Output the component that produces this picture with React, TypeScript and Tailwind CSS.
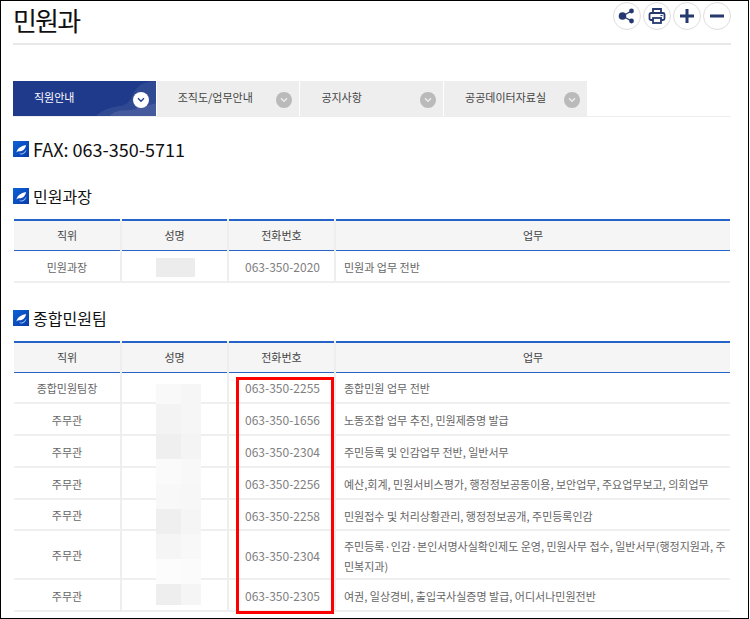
import React from "react";

const FONT = "font-['Noto_Sans_CJK_KR','Noto_Sans',sans-serif]";

function Leaf() {
  return (
    <svg width="16" height="16" viewBox="0 0 16 16" className="shrink-0">
      <defs>
        <linearGradient id="lf" x1="0" y1="0" x2="1" y2="1">
          <stop offset="0" stopColor="#0a63d8" />
          <stop offset="1" stopColor="#0b3aa8" />
        </linearGradient>
      </defs>
      <rect width="16" height="16" fill="url(#lf)" />
      <path d="M3.5 11.5C4 8 7.5 5 13 4 12.6 7.5 10 10.6 6 10.3 5 10.3 4.2 10.8 3.5 11.5Z" fill="#fff" />
      <path d="M6 12.6C9 12.8 11.8 11.6 13.4 8.5 13.2 11.2 11 13.6 8.2 13.5 7.4 13.5 6.6 13.2 6 12.6Z" fill="#8dbdf2" />
    </svg>
  );
}

function Chevron({ active }: { active?: boolean }) {
  return (
    <span className={`flex h-4 w-4 items-center justify-center rounded-full ${active ? "bg-white" : "bg-[#bababa]"}`}>
      <svg width="8" height="6" viewBox="0 0 8 6" fill="none">
        <path d="M1 1.3 4 4.3 7 1.3" stroke={active ? "#1f3a8a" : "#eeeeee"} strokeWidth="1.3" />
      </svg>
    </span>
  );
}

function Tab({ label, active }: { label: string; active?: boolean }) {
  return (
    <div
      className={`relative flex h-[35px] w-[142.7px] items-center overflow-hidden pl-[21px] ${active ? "bg-[#1f3a8a] text-white" : "bg-[#eeeeee] text-[#444444]"}`}
    >
      {active && (
        <svg className="absolute bottom-0 right-0" width="70" height="35" viewBox="0 0 70 35">
          <path d="M10 35C22 24 32 27 40 23 47 19 46 8 56 3 60 1 66 0 70 0V35Z" fill="#fff" opacity="0.08" />
          <path d="M24 35C32 26 42 32 52 27 60 23 64 25 70 22V35Z" fill="#fff" opacity="0.1" />
        </svg>
      )}
      <span className="relative -mt-[2px] text-[11px] leading-none">{label}</span>
      <span className="absolute right-[7px] top-[11px]"><Chevron active={active} /></span>
    </div>
  );
}

function RoundBtn({ children }: { children: React.ReactNode }) {
  return (
    <div className="flex h-[28px] w-[28px] items-center justify-center rounded-full border border-[#dddddd] bg-white">
      {children}
    </div>
  );
}

function Heading({ children, cls }: { children: React.ReactNode; cls: string }) {
  return (
    <div className={`flex items-center gap-[4px] ${cls}`}>
      <Leaf />
      <span className="text-[16px] leading-none text-[#111111]">{children}</span>
    </div>
  );
}

type Row = { role: string; tel: string; work: React.ReactNode; h: string };

function InfoTable({ rows }: { rows: Row[] }) {
  return (
    <table className="w-[716px] table-fixed border-collapse border-t-2 border-t-[#2563c9] text-[11px] text-[#666666]">
      <colgroup>
        <col className="w-[107px]" />
        <col className="w-[107px]" />
        <col className="w-[107px]" />
        <col />
      </colgroup>
      <thead>
        <tr className="h-[30px] border-b border-b-[#2563c9] bg-[#f5f5f5] text-[#444444]">
          <th className="border-r-2 border-r-[#eeeeee] font-normal">직위</th>
          <th className="border-r-2 border-r-[#eeeeee] font-normal">성명</th>
          <th className="border-r-2 border-r-[#eeeeee] font-normal">전화번호</th>
          <th className="font-normal">업무</th>
        </tr>
      </thead>
      <tbody>
        {rows.map((r, i) => (
          <tr key={i} className={`${r.h} border-b-2 border-b-[#efefef]`}>
            <td className="border-r-2 border-r-[#eeeeee] pt-[2px] text-center">{r.role}</td>
            <td className="border-r-2 border-r-[#eeeeee]" />
            <td className="border-r-2 border-r-[#eeeeee] pl-[2px] pt-[2px] text-center text-[12px] text-[#808080]">{r.tel}</td>
            <td className="pl-[8px] pr-[3px] pt-[2px] leading-[20px]">{r.work}</td>
          </tr>
        ))}
      </tbody>
    </table>
  );
}

const rows1: Row[] = [{ role: "민원과장", tel: "063-350-2020", work: "민원과 업무 전반", h: "h-[32px]" }];

const rows2: Row[] = [
  { role: "종합민원팀장", tel: "063-350-2255", work: "종합민원 업무 전반", h: "h-[31px]" },
  { role: "주무관", tel: "063-350-1656", work: "노동조합 업무 추진, 민원제증명 발급", h: "h-[32px]" },
  { role: "주무관", tel: "063-350-2304", work: "주민등록 및 인감업무 전반, 일반서무", h: "h-[32px]" },
  { role: "주무관", tel: "063-350-2256", work: "예산,회계, 민원서비스평가, 행정정보공동이용, 보안업무, 주요업무보고, 의회업무", h: "h-[32px]" },
  { role: "주무관", tel: "063-350-2258", work: "민원접수 및 처리상황관리, 행정정보공개, 주민등록인감", h: "h-[31px]" },
  { role: "주무관", tel: "063-350-2304", work: "주민등록·인감·본인서명사실확인제도 운영, 민원사무 접수, 일반서무(행정지원과, 주민복지과)", h: "h-[49px]" },
  { role: "주무관", tel: "063-350-2305", work: "여권, 일상경비, 출입국사실증명 발급, 어디서나민원전반", h: "h-[32px]" },
];

const patches = [
  { y: 384, h: 20, a: "#f9f9f9", b: "#f6f6f6" },
  { y: 404, h: 30, a: "#f3f3f3", b: "#f6f6f6" },
  { y: 434, h: 25, a: "#efefef", b: "#f4f4f4" },
  { y: 459, h: 25, a: "#fafafa", b: "#f8f8f8" },
  { y: 484, h: 25, a: "#f8f8f8", b: "#f7f7f7" },
  { y: 509, h: 25, a: "#efefef", b: "#f5f5f5" },
  { y: 534, h: 25, a: "#f5f5f5", b: "#f8f8f8" },
  { y: 559, h: 25, a: "#fcfcfc", b: "#fbfbfb" },
  { y: 584, h: 21, a: "#eeeeee", b: "#f5f5f5" },
];

export default function App() {
  return (
    <div className={`relative h-[619px] w-[750px] overflow-hidden bg-white ${FONT}`}>
      <div className="box-border h-[619px] w-[749px] border border-black pl-[12px] pr-[17px]">
        <header className="flex h-[44px] items-start justify-between border-b-2 border-b-[#e8e8e8]">
          <h1 className="pt-[1px] text-[26px] font-normal leading-[36px] tracking-[-1.8px] text-[#111111]">민원과</h1>
          <div className="mt-[1px] flex gap-[2px]">
            <RoundBtn>
              <svg width="18" height="16" viewBox="0 0 18 16" fill="#25396f">
                <circle cx="4.5" cy="8" r="3.8" />
                <circle cx="13.5" cy="3" r="2.4" />
                <circle cx="13.5" cy="13" r="2.4" />
                <path d="M4.5 8 13.5 3M4.5 8l9 5" stroke="#25396f" strokeWidth="1.4" />
              </svg>
            </RoundBtn>
            <RoundBtn>
              <svg width="18" height="18" viewBox="0 0 18 18" fill="none" stroke="#25396f" strokeWidth="1.8">
                <path d="M5 6V2h8v4" />
                <rect x="1.5" y="6" width="15" height="7" rx="1.5" />
                <rect x="5" y="11" width="8" height="5" fill="#fff" />
                <path d="M12.5 8.5h2" strokeWidth="1.2" />
              </svg>
            </RoundBtn>
            <RoundBtn>
              <svg width="16" height="16" viewBox="0 0 16 16" fill="#25396f">
                <path d="M6.5 1h3v5.5H15v3H9.5V15h-3V9.5H1v-3h5.5Z" />
              </svg>
            </RoundBtn>
            <RoundBtn>
              <svg width="16" height="16" viewBox="0 0 16 16" fill="#25396f">
                <rect x="1" y="6.5" width="14" height="3" />
              </svg>
            </RoundBtn>
          </div>
        </header>

        <nav className="mt-[36px] flex h-[36px] gap-[1px] border-b border-b-[#eeeeee]">
          <Tab label="직원안내" active />
          <Tab label="조직도/업무안내" />
          <Tab label="공지사항" />
          <Tab label="공공데이터자료실" />
        </nav>

        <Heading cls="mt-[24px] h-[16px]"><span className="text-[18px]">FAX: 063-350-5711</span></Heading>
        <Heading cls="mt-[31px] h-[16px]">민원과장</Heading>
        <div className="mt-[15px] pl-px"><InfoTable rows={rows1} /></div>
        <Heading cls="mt-[27px] h-[16px]">종합민원팀</Heading>
        <div className="mt-[15px] pl-px"><InfoTable rows={rows2} /></div>
      </div>

      {/* blurred names */}
      <div className="absolute left-[156px] top-[258px] flex h-[19px] w-[39px] bg-[#ececec]" />
      {patches.map((p, i) => (
        <div key={i} className="absolute left-[156px] flex w-[45px]" style={{ top: p.y, height: p.h }}>
          <div className="w-[25px]" style={{ background: p.a }} />
          <div className="w-[20px]" style={{ background: p.b }} />
        </div>
      ))}

      {/* red highlight */}
      <div className="absolute left-[236px] top-[377px] h-[237px] w-[98px] border-[3px] border-[#ff0000]" />
    </div>
  );
}
